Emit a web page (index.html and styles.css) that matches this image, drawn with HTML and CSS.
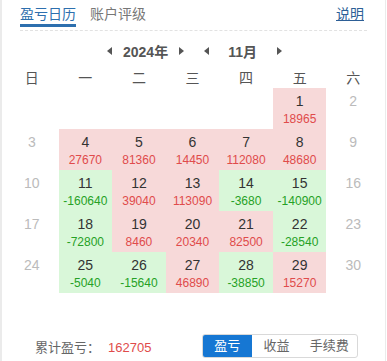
FILE: index.html
```html
<!DOCTYPE html>
<html lang="zh">
<head>
<meta charset="utf-8">
<link rel="stylesheet" href="styles.css">
</head>
<body>
<div class="panel">
  <div class="tabs">
    <div class="tab active">盈亏日历</div>
    <div class="tab">账户评级</div>
    <a class="help">说明</a>
  </div>
  <div class="nav">
    <span class="arr left"></span>
    <span class="label year">2024年</span>
    <span class="arr right"></span>
    <span class="arr left m"></span>
    <span class="label month">11月</span>
    <span class="arr right"></span>
  </div>
  <div class="week">
    <div>日</div><div>一</div><div>二</div><div>三</div><div>四</div><div>五</div><div>六</div>
  </div>
  <div class="grid">
    <div class="c"></div><div class="c"></div><div class="c"></div><div class="c"></div><div class="c"></div>
    <div class="c up"><b>1</b><i>18965</i></div>
    <div class="c off"><b>2</b></div>

    <div class="c off"><b>3</b></div>
    <div class="c up"><b>4</b><i>27670</i></div>
    <div class="c up"><b>5</b><i>81360</i></div>
    <div class="c up"><b>6</b><i>14450</i></div>
    <div class="c up"><b>7</b><i>112080</i></div>
    <div class="c up"><b>8</b><i>48680</i></div>
    <div class="c off"><b>9</b></div>

    <div class="c off"><b>10</b></div>
    <div class="c dn"><b>11</b><i>-160640</i></div>
    <div class="c up"><b>12</b><i>39040</i></div>
    <div class="c up"><b>13</b><i>113090</i></div>
    <div class="c dn"><b>14</b><i>-3680</i></div>
    <div class="c dn"><b>15</b><i>-140900</i></div>
    <div class="c off"><b>16</b></div>

    <div class="c off"><b>17</b></div>
    <div class="c dn"><b>18</b><i>-72800</i></div>
    <div class="c up"><b>19</b><i>8460</i></div>
    <div class="c up"><b>20</b><i>20340</i></div>
    <div class="c up"><b>21</b><i>82500</i></div>
    <div class="c dn"><b>22</b><i>-28540</i></div>
    <div class="c off"><b>23</b></div>

    <div class="c off"><b>24</b></div>
    <div class="c dn"><b>25</b><i>-5040</i></div>
    <div class="c dn"><b>26</b><i>-15640</i></div>
    <div class="c up"><b>27</b><i>46890</i></div>
    <div class="c dn"><b>28</b><i>-38850</i></div>
    <div class="c up"><b>29</b><i>15270</i></div>
    <div class="c off"><b>30</b></div>
  </div>
  <div class="footer">
    <div class="total">累计盈亏：<span class="val">162705</span></div>
    <div class="seg">
      <div class="opt on">盈亏</div>
      <div class="opt">收益</div>
      <div class="opt">手续费</div>
    </div>
  </div>
</div>
</body>
</html>
```
FILE: styles.css
```css
* { box-sizing: border-box; margin: 0; padding: 0; }
html, body { width: 387px; height: 361px; background: #fff; overflow: hidden; }
body {
  font-family: "Liberation Sans", Arial, "Noto Sans CJK SC", sans-serif;
  color: #333;
}
.panel {
  width: 386px;
  height: 361px;
  border-left: 2px solid #ebebeb;
  border-right: 1px solid #ebebeb;
}
.tabs {
  display: flex;
  align-items: flex-start;
  margin: 0 18px 0 18px;
  height: 31px;
  border-bottom: 1px dashed #e2e2e2;
  padding-top: 5px;
}
.tab {
  font-size: 14px;
  line-height: 19px;
  color: #777;
  height: 22px;
  margin-right: 14px;
}
.tab.active {
  color: #2d6fae;
  border-bottom: 3px solid #2d6fae;
  height: 22px;
}
.help {
  margin-left: auto;
  font-size: 14px;
  line-height: 19px;
  color: #2d5f96;
  text-decoration: underline;
  margin-right: 3px;
}
.nav {
  display: flex;
  align-items: center;
  justify-content: center;
  height: 36px;
  padding-top: 3px;
  padding-left: 2px;
}
.label {
  font-size: 14px;
  font-weight: bold;
  color: #555;
}
.year { margin: 0 11px 0 11px; }
.month { margin: 0 20px 0 19px; }
.arr {
  width: 0; height: 0;
  border-top: 4px solid transparent;
  border-bottom: 4px solid transparent;
}
.arr.left { border-right: 5px solid #555; }
.arr.right { border-left: 5px solid #555; }
.arr.m { margin-left: 20px; }
.week {
  display: grid;
  grid-template-columns: repeat(7, 1fr);
  margin-left: 3px;
  width: 375px;
  height: 21px;
  font-size: 14px;
  line-height: 20px;
  color: #555;
  text-align: center;
  font-family: "Noto Sans CJK SC", sans-serif;
}
.grid {
  display: grid;
  grid-template-columns: repeat(7, 1fr);
  grid-auto-rows: 41px;
  margin-left: 3px;
  width: 375px;
}
.c {
  display: flex;
  flex-direction: column;
  align-items: center;
  padding-top: 5px;
}
.c b {
  font-weight: normal;
  font-size: 14px;
  line-height: 16px;
  color: #333;
}
.c i {
  font-style: normal;
  font-size: 12px;
  line-height: 14px;
  margin-top: 3px;
}
.c.up { background: #f7d9d9; }
.c.up i { color: #e04b4b; }
.c.dn { background: #d9f7d9; }
.c.dn i { color: #26a126; }
.c.off b { color: #bbb; }
.footer {
  display: flex;
  align-items: center;
  margin-top: 41px;
  padding-left: 33px;
}
.total {
  font-size: 13px;
  color: #666;
  font-family: "Liberation Sans", "Noto Sans CJK SC", sans-serif;
  width: 167px;
}
.val { color: #e04b4b; margin-left: 8px; }
.seg {
  display: flex;
  height: 24px;
  border: 1px solid #d9d9d9;
  border-radius: 3px;
  overflow: hidden;
  width: 156px;
}
.opt {
  font-size: 13px;
  line-height: 22px;
  color: #666;
  text-align: center;
  width: 50px;
}
.opt:last-child { width: 56px; }
.opt.on {
  background: #1677d3;
  color: #fff;
  width: 49px;
}
```
